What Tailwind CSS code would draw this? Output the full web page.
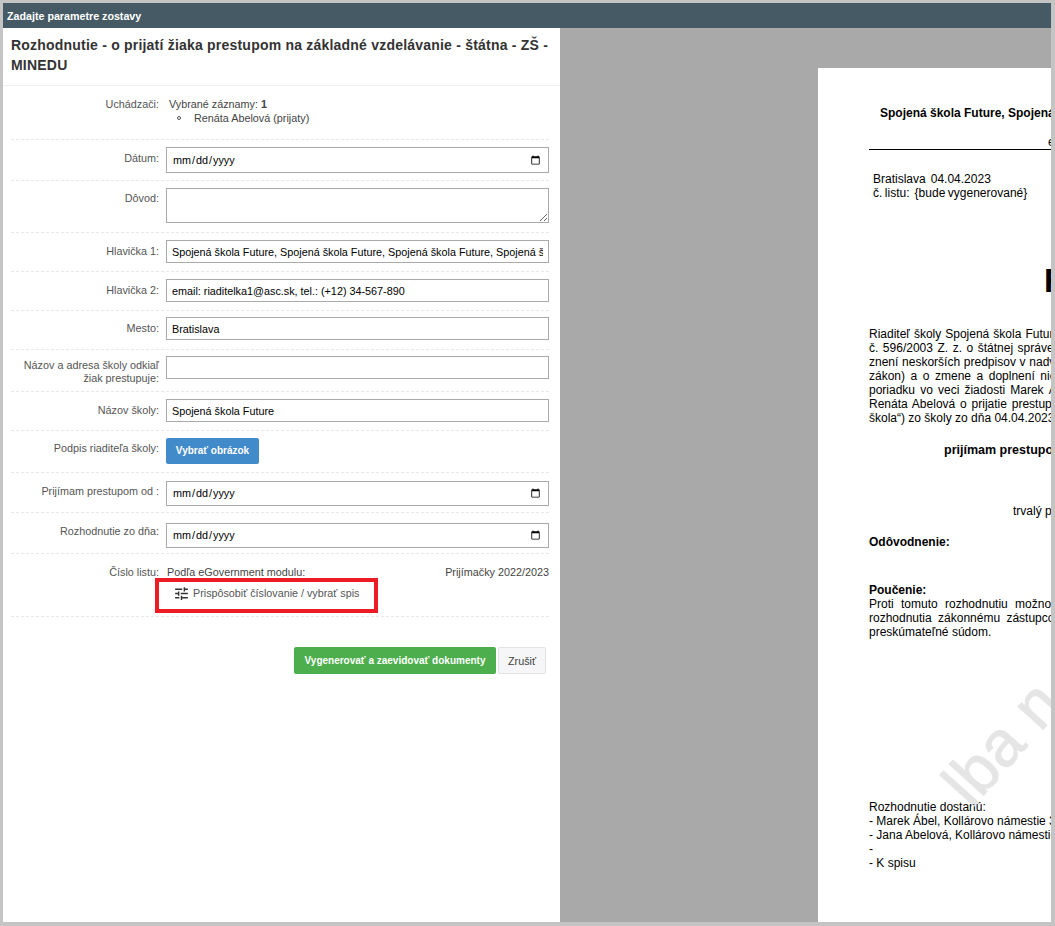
<!DOCTYPE html>
<html lang="sk">
<head>
    <meta charset="UTF-8">
    <title>Zadajte parametre zostavy</title>
    <script src="https://cdn.jsdelivr.net/npm/@tailwindcss/browser@4"></script>
</head>
<body class="m-0">
<div class="h-[926px] w-[1055px] overflow-hidden bg-[#c4c4c4] pt-[3px] pr-[4px] pb-[4px] pl-[3px] font-['Liberation_Sans',Arial,sans-serif] text-[12px] leading-[14px] text-[#333]">
    <div class="flex h-[919px] flex-col overflow-hidden">
        <!-- title bar -->
        <div class="flex h-[25px] shrink-0 items-center bg-[#455a64] px-[4px] text-[10.7px] font-bold text-white">Zadajte parametre zostavy</div>

        <div class="flex min-h-0 flex-1">
            <!-- form -->
            <div class="w-[557px] shrink-0 bg-white text-[10.8px]">
                <div class="h-[58px] border-b border-[#eeeeee] px-[8px] pt-[7px] text-[14px] leading-[20px] font-bold tracking-[0.21px] text-[#333]">Rozhodnutie - o prijatí žiaka prestupom na základné vzdelávanie - štátna - ZŠ - MINEDU</div>

                <div class="ml-[8px] w-[538px]">
                    <div class="flex h-[54px] border-b border-dashed border-[#e8e8e8] pt-[11px]">
                        <div class="w-[148px] text-right text-[#555]">Uchádzači:</div>
                        <div class="ml-[10px] text-[#444]">
                            <div>Vybrané záznamy: <b>1</b></div>
                            <div class="flex items-center pl-[8px]"><span class="h-[4px] w-[4px] rounded-full border border-[#555]"></span><span class="ml-[13px]">Renáta Abelová (prijaty)</span></div>
                        </div>
                    </div>

                    <div class="flex h-[41px] border-b border-dashed border-[#e8e8e8] pt-[7px]">
                        <div class="w-[148px] pt-[4px] text-right text-[#555]">Dátum:</div>
                        <input type="date" class="ml-[7px] h-[26px] w-[383px] border border-[#aaaaaa] px-[5px] text-[10.8px] text-black">
                    </div>

                    <div class="flex h-[52px] border-b border-dashed border-[#e8e8e8] pt-[7px]">
                        <div class="w-[148px] pt-[3px] text-right text-[#555]">Dôvod:</div>
                        <textarea class="ml-[7px] h-[35px] w-[383px] border border-[#aaaaaa] px-[5px] text-[10.8px]"></textarea>
                    </div>

                    <div class="flex h-[39px] border-b border-dashed border-[#e8e8e8] pt-[7px]">
                        <div class="w-[148px] pt-[4px] text-right text-[#555]">Hlavička 1:</div>
                        <input type="text" value="Spojená škola Future, Spojená škola Future, Spojená škola Future, Spojená škola Future" class="ml-[7px] h-[23px] w-[383px] border border-[#aaaaaa] px-[5px] text-[10.8px] text-black">
                    </div>

                    <div class="flex h-[39px] border-b border-dashed border-[#e8e8e8] pt-[7px]">
                        <div class="w-[148px] pt-[4px] text-right text-[#555]">Hlavička 2:</div>
                        <input type="text" value="email: riaditelka1@asc.sk, tel.: (+12) 34-567-890" class="ml-[7px] h-[23px] w-[383px] border border-[#aaaaaa] px-[5px] text-[10.8px] text-black">
                    </div>

                    <div class="flex h-[39px] border-b border-dashed border-[#e8e8e8] pt-[6px]">
                        <div class="w-[148px] pt-[4px] text-right text-[#555]">Mesto:</div>
                        <input type="text" value="Bratislava" class="ml-[7px] h-[23px] w-[383px] border border-[#aaaaaa] px-[5px] text-[10.8px] text-black">
                    </div>

                    <div class="flex h-[42px] border-b border-dashed border-[#e8e8e8] pt-[6px]">
                        <div class="w-[148px] pt-[3px] text-right leading-[13px] text-[#555]">Názov a adresa školy odkiaľ žiak prestupuje:</div>
                        <input type="text" class="ml-[7px] h-[23px] w-[383px] border border-[#aaaaaa] px-[5px] text-[10.8px] text-black">
                    </div>

                    <div class="flex h-[39px] border-b border-dashed border-[#e8e8e8] pt-[7px]">
                        <div class="w-[148px] pt-[4px] text-right text-[#555]">Názov školy:</div>
                        <input type="text" value="Spojená škola Future" class="ml-[7px] h-[23px] w-[383px] border border-[#aaaaaa] px-[5px] text-[10.8px] text-black">
                    </div>

                    <div class="flex h-[42px] border-b border-dashed border-[#e8e8e8] pt-[7px]">
                        <div class="w-[148px] pt-[3px] text-right text-[#555]">Podpis riaditeľa školy:</div>
                        <button class="ml-[7px] h-[26px] w-[93px] rounded-[2px] bg-[#428bca] text-[10px] font-bold text-white">Vybrať obrázok</button>
                    </div>

                    <div class="flex h-[40px] border-b border-dashed border-[#e8e8e8] pt-[8px]">
                        <div class="w-[148px] pt-[3px] text-right text-[#555]">Prijímam prestupom od :</div>
                        <input type="date" class="ml-[7px] h-[25px] w-[383px] border border-[#aaaaaa] px-[5px] text-[10.8px] text-black">
                    </div>

                    <div class="flex h-[41px] border-b border-dashed border-[#e8e8e8] pt-[10px]">
                        <div class="w-[148px] pt-[1px] text-right text-[#555]">Rozhodnutie zo dňa:</div>
                        <input type="date" class="ml-[7px] h-[25px] w-[383px] border border-[#aaaaaa] px-[5px] text-[10.8px] text-black">
                    </div>

                    <div class="h-[63px] border-b border-dashed border-[#e8e8e8] pt-[11px]">
                        <div class="flex">
                            <div class="w-[148px] text-right text-[#555]">Číslo listu:</div>
                            <div class="ml-[7px] flex w-[383px] justify-between text-[#444]">
                                <span class="pl-[1px]">Podľa eGovernment modulu:</span>
                                <span>Prijímačky 2022/2023</span>
                            </div>
                        </div>
                        <!-- highlighted action -->
                        <div class="mt-[-1px] ml-[144px] flex h-[35px] w-[223px] items-center border-[4px] border-[#ed1c24] pb-[5px] pl-[14px] text-[#555]">
                            <svg class="h-[17px] w-[17px] shrink-0 text-[#333]" viewBox="0 0 24 24" fill="currentColor"><path d="M3 17v2h6v-2H3zM3 5v2h10V5H3zm10 16v-2h8v-2h-8v-2h-2v6h2zM7 9v2H3v2h4v2h2V9H7zm14 4v-2H11v2h10zm-6-4h2V7h4V5h-4V3h-2v6z"/></svg>
                            <span class="ml-[3px] text-[10.75px] whitespace-nowrap">Prispôsobiť číslovanie / vybrať spis</span>
                        </div>
                    </div>

                    <div class="mt-[30px] flex justify-end gap-[2px] pr-[3px]">
                        <button class="h-[27px] w-[202px] rounded-[2px] bg-[#4cae4c] text-[10px] font-bold whitespace-nowrap text-white">Vygenerovať a zaevidovať dokumenty</button>
                        <button class="h-[27px] w-[48px] rounded-[2px] border border-[#e3e3e3] bg-[#f6f6f8] text-[#444]">Zrušiť</button>
                    </div>
                </div>
            </div>

            <!-- document preview -->
            <div class="min-w-0 flex-1 overflow-hidden bg-[#a9a9a9] pt-[40px] pl-[258px]">
                <div class="relative h-[900px] w-[700px] overflow-hidden bg-white pt-[38px] pl-[51px] text-black">
                    <div class="pl-[11px] font-bold whitespace-nowrap">Spojená škola Future, Spojená škola Future, Spojená škola Future</div>
                    <div class="mt-[15px] h-[15px] w-[500px] border-b border-black pl-[179px] whitespace-nowrap">email: riaditelka1@asc.sk</div>
                    <div class="mt-[22px] pl-[4px] whitespace-nowrap">
                        <div class="[word-spacing:-0.8px]">Bratislava&nbsp; 04.04.2023</div>
                        <div class="[word-spacing:-0.8px]">č. listu:&nbsp; {bude vygenerované}</div>
                    </div>
                    <div class="mt-[62px] pl-[175px] text-[33px] leading-[38px] font-bold whitespace-nowrap">ROZHODNUTIE</div>
                    <div class="mt-[27px] whitespace-nowrap">
                        <div class="[word-spacing:0.7px]">Riaditeľ školy Spojená škola Future</div>
                        <div class="[word-spacing:1.2px]">č. 596/2003 Z. z. o štátnej správe v školstve</div>
                        <div class="[word-spacing:0.4px]">znení neskorších predpisov v nadväznosti</div>
                        <div class="[word-spacing:2.2px]">zákon) a o zmene a doplnení niektorých</div>
                        <div class="[word-spacing:1.8px]">poriadku vo veci žiadosti Marek Ábel</div>
                        <div class="[word-spacing:1.5px]">Renáta Abelová o prijatie prestupom</div>
                        <div>škola“) zo školy zo dňa 04.04.2023</div>
                    </div>
                    <div class="mt-[18px] pl-[75px] text-[12.5px] font-bold whitespace-nowrap">prijímam prestupom</div>
                    <div class="mt-[47px] pl-[144px] whitespace-nowrap">trvalý pobyt</div>
                    <div class="mt-[17px] font-bold whitespace-nowrap">Odôvodnenie:</div>
                    <div class="mt-[34px] font-bold whitespace-nowrap">Poučenie:</div>
                    <div class="whitespace-nowrap">
                        <div class="[word-spacing:4px]">Proti tomuto rozhodnutiu možno</div>
                        <div class="[word-spacing:3px]">rozhodnutia zákonnému zástupcovi</div>
                        <div>preskúmateľné súdom.</div>
                    </div>
                    <div class="mt-[161px] whitespace-nowrap">
                        <div>Rozhodnutie dostanú:</div>
                        <div>- Marek Ábel, Kollárovo námestie 3</div>
                        <div>- Jana Abelová, Kollárovo námestie 3</div>
                        <div>-</div>
                        <div>- K spisu</div>
                    </div>
                    <!-- watermark -->
                    <div class="absolute top-[705px] left-[113px] origin-top-left -rotate-[48deg] text-[64px] leading-[64px] whitespace-nowrap text-black/10 [-webkit-text-stroke:1px_#e5e5e5]">lba n</div>
                </div>
            </div>
        </div>
    </div>
</div>
</body>
</html>
